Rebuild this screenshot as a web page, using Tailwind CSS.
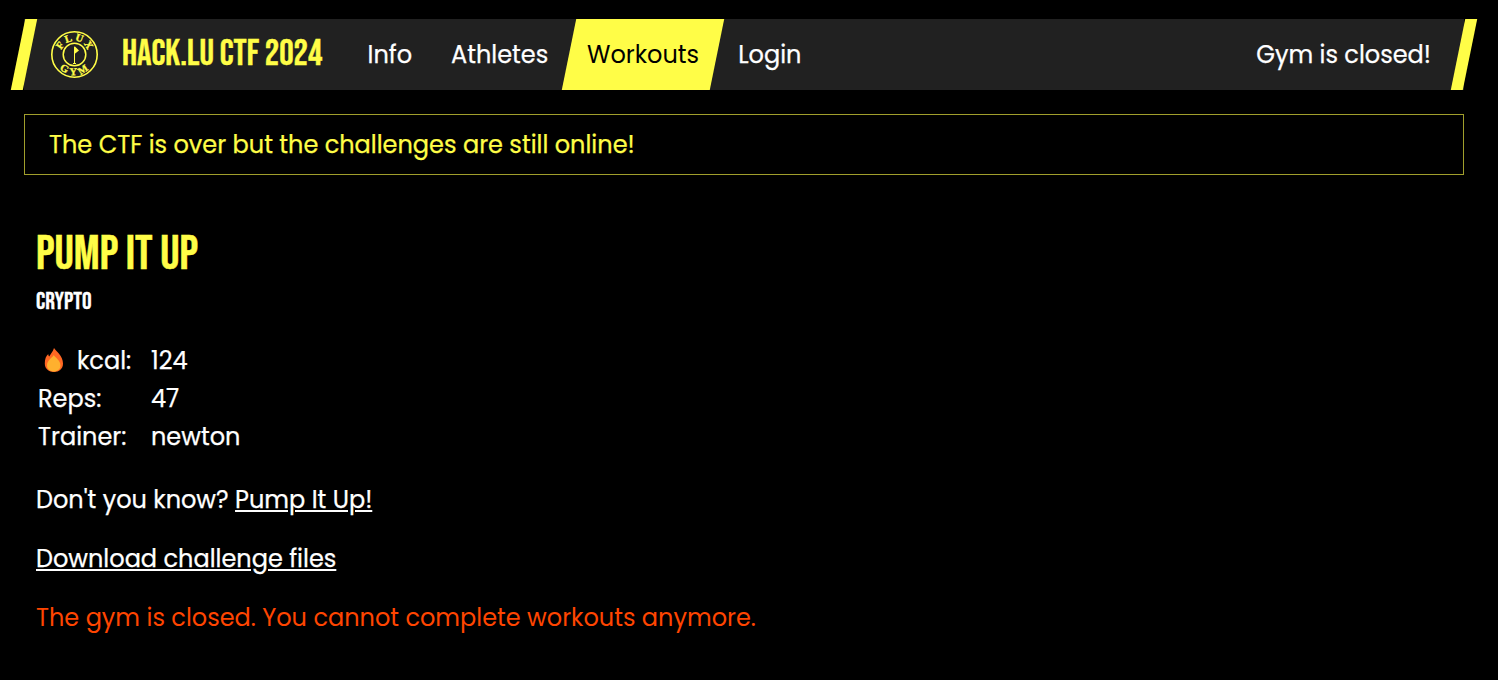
<!DOCTYPE html>
<html lang="en">
<head>
<meta charset="utf-8">
<title>Pump It Up</title>
<script src="https://cdn.jsdelivr.net/npm/@tailwindcss/browser@4"></script>
</head>
<body class="min-h-screen overflow-hidden bg-black pt-[19px] font-[Poppins,Inter,sans-serif] text-2xl leading-[35px] text-white [-webkit-text-stroke:0.25px]">
<header class="relative mx-6 mr-[34px] flex h-[71px] items-center bg-[#212121]">
  <div class="absolute -left-[6px] top-0 h-full w-3 -skew-x-[11.5deg] bg-[#fffd47]"></div>
  <div class="absolute -right-[6px] top-0 h-full w-3 -skew-x-[11.5deg] bg-[#fffd47]"></div>
  <svg class="mb-px ml-[26px] size-12 shrink-0 [-webkit-text-stroke:0]" viewBox="0 0 48 48" fill="none" stroke="#fffd47">
    <circle cx="24.5" cy="24.5" r="22.7" stroke-width="1.6"/>
    <circle cx="24.5" cy="24.5" r="11.3" stroke-width="1.5"/>
    <path d="M24.5 34V17M23 33.500h3" stroke-width="1"/>
    <path d="M24.500 16l4.500 4.500-4.500 3.500z" fill="#fffd47" stroke="none"/>
    <path id="top" d="M10.900 24.500a13.600 13.600 0 0 1 27.200 0" stroke="none"/>
    <path id="bot" d="M3.900 24.500a20.600 20.600 0 0 0 41.200 0" stroke="none"/>
    <g fill="#fffd47" stroke="#fffd47" stroke-width=".35" font-family="Liberation Serif" font-weight="700" font-size="10.5" text-anchor="middle">
      <text letter-spacing="1.7"><textPath href="#top" startOffset="52%">FLUX</textPath></text>
      <text letter-spacing="3.2"><textPath href="#bot" startOffset="52%">GYM</textPath></text>
    </g>
  </svg>
  <div class="ml-6 w-[201px] shrink-0 whitespace-nowrap font-['Bebas_Neue'] text-4xl text-[#fffd47] [-webkit-text-stroke:0.4px]">HACK.LU CTF 2024</div>
  <nav class="ml-[25px] flex h-full items-center">
    <a class="px-[19.5px]">Info</a>
    <a class="pl-[19.5px] pr-[20.5px]">Athletes</a>
    <a class="flex h-full w-[148px] -skew-x-[11.5deg] items-center justify-center bg-[#fffd47] text-black [-webkit-text-stroke:0]"><span class="skew-x-[11.5deg]">Workouts</span></a>
    <a class="pl-[21.5px]">Login</a>
  </nav>
  <div class="ml-auto mr-[33px]">Gym is closed!</div>
</header>
<div class="ml-6 mr-[34px] mt-6 border border-[#a09e2c] px-6 py-3 text-[#fffd47]">The CTF is over but the challenges are still online!</div>
<main class="px-9 pt-[51px]">
  <h1 class="font-['Bebas_Neue'] text-5xl leading-[58px] text-[#fffd47] [-webkit-text-stroke:0.5px]">Pump It Up</h1>
  <h3 class="mt-[3px] font-['Bebas_Neue'] text-2xl leading-[29px] [-webkit-text-stroke:0.3px]">crypto</h3>
  <table class="mt-[25px] border-separate border-spacing-0.5 leading-9">
    <tr><td class="w-[111px] p-0"><div class="flex items-center"><svg class="mb-0.5 ml-1.5 mr-[13px] h-6 w-5" viewBox="0 0 20 24"><path d="M10 0C12 3 19 8 19 15.500C19 21 15 24 10 24S.8 21 .8 15.500C.8 11 2 8 4.300 6C4.300 7 4.600 8 5.200 8.500C6.500 6 8.800 4 10 0Z" fill="#ff6723"/><path d="M9.800 7C11 9.500 16.500 12 16.500 17.500C16.500 21 13.500 23.500 9.800 23.500S3 21 3 17.500C3 12 8.500 9.500 9.800 7Z" fill="#ffb02e"/></svg>kcal:</div></td><td class="p-0">124</td></tr>
    <tr><td class="p-0">Reps:</td><td class="p-0">47</td></tr>
    <tr><td class="p-0">Trainer:</td><td class="p-0">newton</td></tr>
  </table>
  <p class="mt-[25px]">Don't you know? <a class="underline">Pump It Up!</a></p>
  <p class="mt-6"><a class="underline">Download challenge files</a></p>
  <p class="mt-6 text-[#ff4500] [-webkit-text-stroke:0]">The gym is closed. You cannot complete workouts anymore.</p>
</main>
</body>
</html>
